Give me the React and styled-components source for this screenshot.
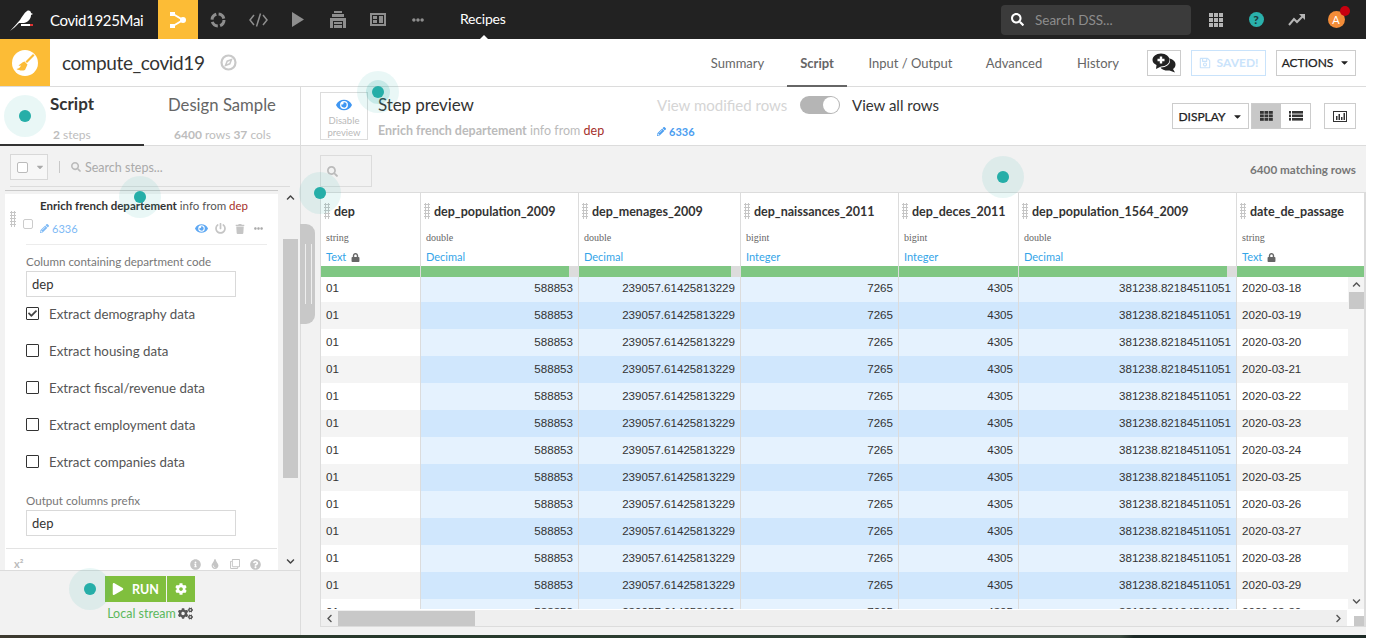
import React from 'react';
import styled, { createGlobalStyle } from 'styled-components';
import {
  FaEye, FaPowerOff, FaTrash, FaEllipsisH, FaPencilAlt, FaLock, FaPlay, FaCog, FaCogs,
  FaInfoCircle, FaTint, FaRegClone, FaQuestionCircle, FaSearch, FaRegSave, FaCaretDown,
  FaChevronUp, FaChevronDown, FaChevronLeft, FaChevronRight, FaCheck,
} from 'react-icons/fa';

const SANS = '"Lato", "Noto Sans", sans-serif';

const Global = createGlobalStyle`
  html, body { margin: 0; padding: 0; background: #fff; overflow: hidden; }
  body { font-family: ${SANS}; color: #333; width: 1378px; height: 638px; }
  * { box-sizing: border-box; }
`;

const Page = styled.div`
  position: relative;
  width: 1366px;
  height: 638px;
  display: flex;
  flex-direction: column;
  background: linear-gradient(90deg, #3d3a30 0%, #24382a 30%, #3c4a40 82%, #1d2a26 83%);
  overflow: hidden;
`;

/* ---------- top bar ---------- */
const TopBar = styled.header`
  height: 39px;
  flex: none;
  display: flex;
  align-items: center;
  background: #222;
  color: #fff;
`;
const Logo = styled.div`
  width: 50px;
  display: flex;
  justify-content: flex-start;
  padding-left: 9px;
`;
const ProjectName = styled.div`
  width: 108px;
  font-size: 15px;
  letter-spacing: -0.35px;
  white-space: nowrap;
`;
const NavCell = styled.div`
  width: 40px;
  height: 39px;
  display: flex;
  align-items: center;
  justify-content: center;
  color: #8e8e8e;
  background: ${p => (p.$active ? '#fcbc36' : 'transparent')};
`;
const NavLabel = styled.div`
  position: relative;
  margin-left: 22px;
  width: 45px;
  height: 39px;
  line-height: 38px;
  font-size: 14px;
  letter-spacing: -0.2px;
  white-space: nowrap;
  &::after {
    content: '';
    position: absolute;
    left: 20px;
    bottom: 0;
    border: 4px solid transparent;
    border-top: 0;
    border-bottom-color: #fff;
  }
`;
const SearchBox = styled.div`
  margin-left: auto;
  width: 190px;
  height: 30px;
  display: flex;
  align-items: center;
  gap: 11px;
  padding-left: 10px;
  border-radius: 4px;
  background: #3b3b3b;
  color: #fff;
  font-size: 13.5px;
  span { color: #8d8d8d; }
`;
const TopIcons = styled.div`
  width: 175px;
  display: flex;
  align-items: center;
  padding-left: 5px;
`;
const TopIcon = styled.div`
  position: relative;
  width: 40px;
  display: flex;
  justify-content: center;
  color: #b5b5b5;
`;
const HelpDot = styled.div`
  width: 15px;
  height: 15px;
  border-radius: 50%;
  background: #2ab1ac;
  color: #1d3a3a;
  font-size: 12px;
  font-weight: 900;
  line-height: 15px;
  text-align: center;
`;
const Avatar = styled.div`
  position: relative;
  width: 17px;
  height: 17px;
  border-radius: 50%;
  background: #f28c38;
  color: #fff;
  font-size: 11px;
  line-height: 17px;
  text-align: center;
`;
const AvatarBadge = styled.i`
  position: absolute;
  top: -5px;
  right: -5px;
  width: 10px;
  height: 10px;
  border-radius: 50%;
  background: #c8000f;
`;

/* ---------- recipe header ---------- */
const SubHeader = styled.div`
  height: 48px;
  flex: none;
  display: flex;
  align-items: stretch;
  background: #fff;
  border-bottom: 1px solid #dcdcdc;
`;
const RecipeIcon = styled.div`
  width: 50px;
  display: flex;
  align-items: center;
  justify-content: center;
  background: #fcbc36;
`;
const RecipeTitle = styled.div`
  display: flex;
  align-items: center;
  gap: 15px;
  padding-left: 12px;
  font-size: 19px;
  letter-spacing: -0.4px;
  color: #333;
`;
const Tabs = styled.nav`
  margin-left: auto;
  display: flex;
  align-items: stretch;
`;
const Tab = styled.div`
  width: ${p => p.$w}px;
  display: flex;
  align-items: center;
  justify-content: center;
  padding-top: 2px;
  font-size: 13px;
  white-space: nowrap;
  color: #666;
  font-weight: ${p => (p.$active ? 700 : 400)};
  border-bottom: 2px solid ${p => (p.$active ? '#666' : 'transparent')};
  margin-bottom: -1px;
`;
const HeadActions = styled.div`
  display: flex;
  align-items: center;
  gap: 10px;
  padding: 0 10px 0 5px;
`;
const Btn = styled.button`
  height: 26px;
  width: ${p => p.$w}px;
  padding: 0;
  display: inline-flex;
  align-items: center;
  justify-content: center;
  gap: 6px;
  font-family: ${SANS};
  font-size: 12px;
  font-weight: ${p => (p.$faded ? 700 : 400)};
  -webkit-text-stroke: ${p => (p.$faded ? 0 : 0.25)}px;
  color: ${p => (p.$faded ? '#c9e3fb' : '#222')};
  background: #fff;
  border: 1px solid ${p => (p.$faded ? '#c9e3fb' : '#ccc')};
  white-space: nowrap;
`;

/* ---------- main ---------- */
const Main = styled.main`
  height: 548px;
  flex: none;
  display: flex;
  background: #f2f2f2;
`;
const Left = styled.aside`
  width: 301px;
  flex: none;
  display: flex;
  flex-direction: column;
  border-right: 1px solid #dcdcdc;
`;
const LeftTabs = styled.div`
  height: 59px;
  flex: none;
  display: flex;
  background: #fff;
  border-bottom: 1px solid #dcdcdc;
`;
const LeftTab = styled.div`
  width: ${p => p.$w}px;
  padding-top: ${p => p.$pt}px;
  padding-left: ${p => p.$pl}px;
  border-bottom: ${p => (p.$active ? '2px solid #333' : 'none')};
  height: ${p => (p.$active ? '59px' : '58px')};
`;
const LeftTabTitle = styled.div`
  font-size: ${p => (p.$active ? 17 : 16.7)}px;
  font-weight: ${p => (p.$active ? 700 : 400)};
  color: ${p => (p.$active ? '#333' : '#666')};
  line-height: 20px;
  white-space: nowrap;
`;
const LeftTabSub = styled.div`
  margin-top: ${p => p.$mt}px;
  margin-left: ${p => p.$ml}px;
  font-size: 12px;
  color: #bdbdbd;
  line-height: 14px;
  white-space: nowrap;
  b { font-weight: 700; }
`;
const StepToolbar = styled.div`
  height: 41px;
  flex: none;
  margin: 0 10px;
  display: flex;
  align-items: center;
  border-bottom: 1px solid #dcdcdc;
  padding-top: 2px;
`;
const SelectAll = styled.div`
  width: 38px;
  height: 26px;
  display: flex;
  align-items: center;
  gap: 7px;
  padding-left: 6px;
  border: 1px solid #d8d8d8;
  background: #f7f7f7;
  color: #aaa;
`;
const Box = styled.span`
  width: ${p => p.$s || 11}px;
  height: ${p => p.$s || 11}px;
  flex: none;
  display: inline-flex;
  align-items: center;
  justify-content: center;
  background: #fff;
  border: 1px solid ${p => p.$c || '#bbb'};
  border-radius: ${p => p.$r || 2}px;
  color: #333;
`;
const Sep = styled.div`
  width: 1px;
  height: 12px;
  background: #c8c8c8;
  margin: 0 11px;
`;
const StepSearch = styled.div`
  display: flex;
  align-items: center;
  gap: 4px;
  font-size: 12.5px;
  color: #aaa;
  white-space: nowrap;
`;
const StepsArea = styled.div`
  flex: 1;
  min-height: 0;
  display: flex;
  padding: 3px 0 0 5px;
  overflow: hidden;
`;
const Card = styled.section`
  position: relative;
  width: 273px;
  height: 380px;
  flex: none;
  border-top: 1px solid #c9c9c9;
  padding-top: 3px;
  background: linear-gradient(#f2f2f2 3px, #fff 3px);
  overflow: hidden;
`;
const CardHead = styled.div`
  display: grid;
  grid-template-columns: 13px 17px 1fr;
  padding: 4px 0 0 5px;
  height: 50px;
`;
const Grip = styled.span`
  display: block;
  flex: none;
  width: 6px;
  height: 16px;
  background-image: radial-gradient(#c6c6c6 1px, transparent 1.1px);
  background-size: 3px 3px;
`;
const GripCell = styled.div`
  padding-top: 13px;
`;
const BoxCell = styled.div`
  padding-top: 15px;
`;
const StepTitle = styled.div`
  font-size: 11.5px;
  line-height: 16px;
  color: #555;
  white-space: nowrap;
  b { color: #333; font-weight: 700; }
  em { font-style: normal; color: #a5302c; }
`;
const StepMeta = styled.div`
  display: flex;
  align-items: center;
  margin-top: 8px;
  width: 228px;
  color: #c5c5c5;
`;
const Pencil = styled.span`
  display: inline-flex;
  align-items: center;
  gap: 3px;
  font-size: 11px;
  font-weight: ${p => (p.$bold ? 700 : 400)};
  color: ${p => (p.$bold ? '#4a9df0' : '#7db9f5')};
`;
const MetaIcons = styled.div`
  margin-left: auto;
  display: grid;
  grid-template-columns: repeat(4, 19px);
  justify-items: center;
  align-items: center;
`;
const StepBody = styled.div`
  margin: 0 11px 0 21px;
  border-top: 1px solid #ececec;
  padding-top: 9px;
`;
const FieldLabel = styled.div`
  font-size: 11.6px;
  line-height: 15px;
  color: #777;
  white-space: nowrap;
`;
const TextInput = styled.div`
  width: 210px;
  height: 26px;
  margin-top: 2px;
  padding-left: 5px;
  border: 1px solid #d9d9d9;
  background: #fff;
  font-size: 13px;
  line-height: 24px;
  color: #333;
`;
const Checks = styled.div`
  margin: -2px 0 13px;
`;
const CheckRow = styled.div`
  height: 37px;
  display: flex;
  align-items: center;
  gap: 10px;
  font-size: 13.3px;
  color: #555;
  white-space: nowrap;
`;
const StepFooter = styled.div`
  margin: 12px 1px 0;
  border-top: 1px solid #e3e3e3;
  padding: 9px 12px 0 8px;
  height: 22px;
  display: flex;
  align-items: center;
  color: #bbb;
  font-size: 11px;
  font-weight: 700;
  line-height: 12px;
`;
const FootIcons = styled.div`
  margin-left: auto;
  display: grid;
  grid-template-columns: repeat(4, 20px);
  justify-items: center;
  color: #c5c5c5;
`;
const ScrollY = styled.div`
  width: 15px;
  flex: none;
  margin: 0 0 0 5px;
  display: flex;
  flex-direction: column;
  align-items: center;
  color: #444;
`;
const ArrowCell = styled.div`
  height: ${p => p.$h}px;
  flex: none;
  display: flex;
  align-items: center;
  justify-content: center;
`;
const ThumbY = styled.div`
  width: 100%;
  height: ${p => p.$h}px;
  flex: none;
  background: #c8c8c8;
`;
const RunBar = styled.div`
  height: 65px;
  flex: none;
  display: flex;
  flex-direction: column;
  align-items: center;
  padding-top: 5px;
  border-top: 1px solid #dcdcdc;
`;
const RunRow = styled.div`
  display: flex;
  gap: 1px;
`;
const RunBtn = styled.button`
  width: ${p => p.$w}px;
  height: 26px;
  padding: 0;
  border: 0;
  background: #80bf3e;
  color: #fff;
  font-family: ${SANS};
  font-size: 12.5px;
  font-weight: 700;
  display: flex;
  align-items: center;
  justify-content: center;
  gap: 8px;
`;
const Engine = styled.div`
  margin-top: 4px;
  display: flex;
  align-items: center;
  gap: 2px;
  font-size: 12.5px;
  color: #5cb85c;
  svg { color: #555; }
`;

/* ---------- right ---------- */
const Right = styled.div`
  flex: 1;
  min-width: 0;
  display: flex;
  flex-direction: column;
`;
const PreviewBar = styled.div`
  height: 59px;
  flex: none;
  display: flex;
  align-items: flex-start;
  background: #fff;
  border-bottom: 1px solid #dcdcdc;
  padding: 5px 10px 0 19px;
`;
const DisableBox = styled.div`
  width: 48px;
  height: 48px;
  flex: none;
  border: 1px solid #dcdcdc;
  display: flex;
  flex-direction: column;
  align-items: center;
  padding-top: 5px;
  font-size: 9.5px;
  line-height: 12px;
  color: #b9b9b9;
  text-align: center;
  svg { color: #3f96f2; margin-bottom: 3px; }
`;
const PreviewText = styled.div`
  width: 289px;
  padding: 2px 0 0 10px;
  flex: none;
`;
const PreviewTitle = styled.div`
  font-size: 17px;
  letter-spacing: -0.1px;
  line-height: 22px;
  color: #333;
  white-space: nowrap;
`;
const PreviewSub = styled.div`
  margin-top: 8px;
  font-size: 12.5px;
  line-height: 14px;
  color: #bbb;
  white-space: nowrap;
  b { font-weight: 700; }
  em { font-style: normal; color: #a5302c; }
`;
const ModeCol = styled.div`
  flex: none;
  padding-top: 4px;
`;
const ModeRow = styled.div`
  display: flex;
  align-items: center;
  height: 18px;
  font-size: 15px;
  white-space: nowrap;
  color: #333;
`;
const ModeOff = styled.span`
  width: 143px;
  color: #d5d5d5;
`;
const Toggle = styled.span`
  position: relative;
  width: 40px;
  height: 18px;
  margin-right: 12px;
  flex: none;
  border-radius: 9px;
  background: #b5b5b5;
  &::after {
    content: '';
    position: absolute;
    right: 1px;
    top: 1px;
    width: 16px;
    height: 16px;
    border-radius: 50%;
    background: #fff;
  }
`;
const ModeCount = styled.div`
  margin-top: 6px;
`;
const DisplayTools = styled.div`
  margin-left: auto;
  margin-top: 11px;
  display: flex;
  align-items: center;
`;
const ViewGroup = styled.div`
  display: flex;
  width: 60px;
  height: 26px;
  margin: 0 13px 0 2px;
  border: 1px solid #ccc;
  background: #fff;
`;
const ViewCell = styled.div`
  width: 30px;
  display: flex;
  align-items: center;
  justify-content: center;
  background: ${p => (p.$on ? '#c8c8c8' : '#fff')};
`;
const FilterBar = styled.div`
  height: 46px;
  flex: none;
  display: flex;
  align-items: flex-start;
  justify-content: space-between;
  padding: 9px 10px 0 19px;
`;
const FilterBox = styled.div`
  width: 52px;
  height: 32px;
  padding-left: 6px;
  display: flex;
  align-items: center;
  border: 1px solid #dcdcdc;
  color: #bbb;
`;
const MatchCount = styled.div`
  margin-top: 7px;
  font-size: 11.7px;
  line-height: 15px;
  font-weight: 700;
  color: #777;
`;
const Frame = styled.div`
  position: relative;
  width: 1046px;
  height: 435px;
  margin-left: 19px;
  flex: none;
  border: 1px solid #dcdcdc;
  border-right-width: 2px;
  background: #efefef;
`;
const TableClip = styled.div`
  height: 416px;
  overflow: hidden;
  background: #fff;
`;
const GridRow = styled.div`
  display: grid;
  grid-template-columns: 100px 158px 162px 158px 120px 218px 127px;
`;
const HeadCell = styled.div`
  position: relative;
  height: 73px;
  padding: 8px 0 0 5px;
  border-right: 1px solid #dcdcdc;
  background: #fff;
  &:last-child { border-right: 0; }
`;
const HeadName = styled.div`
  display: flex;
  align-items: center;
  gap: 4px;
  height: 20px;
  margin-left: -2px;
  font-size: 12.5px;
  font-weight: 700;
  color: #333;
  white-space: nowrap;
`;
const HeadType = styled.div`
  margin-top: 10px;
  font-family: "Liberation Serif", serif;
  font-size: 10px;
  line-height: 14px;
  color: #666;
`;
const HeadMeaning = styled.div`
  margin-top: 5px;
  display: flex;
  align-items: center;
  gap: 5px;
  font-size: 11px;
  line-height: 14px;
  color: #34a5e8;
  svg { color: #666; }
`;
const QualityCell = styled.div`
  height: 11px;
  border-right: 1px solid #dcdcdc;
  background: ${p => (p.$rest
    ? 'linear-gradient(90deg, #7fc783 calc(100% - 9px), #dcdcdc calc(100% - 9px))'
    : '#7fc783')};
  &:last-child { border-right: 0; }
`;
const Cell = styled.div`
  height: ${p => (p.$first ? 25 : 27)}px;
  line-height: ${p => (p.$first ? 21 : 25)}px;
  padding: 0 5px;
  font-family: "Liberation Sans", Arial, sans-serif;
  font-size: 11.6px;
  color: #333;
  white-space: nowrap;
  text-align: ${p => (p.$num ? 'right' : 'left')};
  border-right: 1px solid #dcdcdc;
  background: ${p =>
    p.$num ? (p.$odd ? '#d0e7fd' : '#e5f2fe') : p.$odd ? '#f4f4f4' : '#fff'};
  &:last-child { border-right: 0; }
`;
const VBar = styled.div`
  position: absolute;
  top: 84px;
  right: 0;
  width: 16px;
  height: 332px;
  display: flex;
  flex-direction: column;
  align-items: center;
  color: #555;
  background: #f4f4f4;
`;
const VThumb = styled.div`
  width: 15px;
  height: 17px;
  background: #c8c8c8;
`;
const VSpacer = styled.div`
  flex: 1;
`;
const HBar = styled.div`
  height: 17px;
  display: flex;
  align-items: center;
  color: #555;
  background: #efefef;
  border-top: 1px solid #fff;
`;
const HThumb = styled.div`
  width: 137px;
  height: 15px;
  background: #c8c8c8;
`;
const HFill = styled.div`
  flex: 1;
`;
const HArrow = styled.div`
  width: 17px;
  flex: none;
  display: flex;
  justify-content: center;
`;
const Corner = styled.div`
  width: 17px;
  height: 100%;
  flex: none;
  display: flex;
  align-items: flex-end;
  justify-content: flex-end;
  background: #fff;
  &::after {
    content: '';
    width: 10px;
    height: 10px;
    background: #c8c8c8;
  }
`;
const Splitter = styled.div`
  position: absolute;
  left: 300px;
  top: 224px;
  width: 15px;
  height: 100px;
  border-radius: 0 9px 9px 0;
  background: #c8c8c8;
  &::after {
    content: '';
    position: absolute;
    left: 5px;
    top: 20px;
    width: 5px;
    height: 60px;
    border-left: 1px solid #eee;
    border-right: 1px solid #eee;
  }
`;

/* ---------- tutorial hotspots ---------- */
const Hotspot = styled.span`
  position: absolute;
  left: ${p => p.$x - 21}px;
  top: ${p => p.$y - 21}px;
  width: 42px;
  height: 42px;
  border-radius: 50%;
  background: rgba(38, 174, 168, 0.1);
  pointer-events: none;
  &::before {
    content: '';
    position: absolute;
    inset: ${p => (p.$ring ? 9 : 15)}px;
    border-radius: 50%;
    background: rgba(38, 174, 168, 0.18);
  }
  &::after {
    content: '';
    position: absolute;
    left: 15px;
    top: 15px;
    width: 12px;
    height: 12px;
    border-radius: 50%;
    background: #26aea8;
  }
`;

/* ---------- drawings ---------- */
const Bird = () => (
  <svg width="24" height="24" viewBox="0 0 24 24">
    <path fill="#fff" d="M1 23 C5 19 8 15 11 12 C13 9 15 5 18 3 C20 2 22 3 22 5 L24 6 L22 7 C22 10 20 14 15 15 L10 15 C7 18 4 21 1 23Z" />
    <rect x="12" y="16" width="9" height="2" fill="#fff" />
    <rect x="21" y="16" width="3" height="2" fill="#d33" />
  </svg>
);
const FlowIcon = () => (
  <svg width="18" height="18" viewBox="0 0 18 18">
    <path fill="none" stroke="#fff" strokeWidth="2" d="M4 3 L14 9 L4 15" />
    <rect x="1" y="1" width="5" height="4" fill="#fff" />
    <rect x="1" y="13" width="5" height="4" fill="#fff" />
    <circle cx="14" cy="9" r="3" fill="#fff" />
  </svg>
);
const RingIcon = () => (
  <svg width="16" height="16" viewBox="0 0 16 16">
    <circle cx="8" cy="8" r="6" fill="none" stroke="#8e8e8e" strokeWidth="3" strokeDasharray="7 2.4" />
  </svg>
);
const CodeIcon = () => (
  <svg width="19" height="14" viewBox="0 0 19 14" fill="none" stroke="#8e8e8e" strokeWidth="1.5">
    <path d="M5 2 L1 7 L5 12" />
    <path d="M14 2 L18 7 L14 12" />
    <path d="M11.5 0.5 L7.5 13.5" />
  </svg>
);
const PlayIcon = () => (
  <svg width="12" height="15" viewBox="0 0 12 15"><path fill="#8e8e8e" d="M0 0 L12 7.5 L0 15Z" /></svg>
);
const StackIcon = () => (
  <svg width="16" height="17" viewBox="0 0 16 17" fill="#8e8e8e">
    <rect x="4" y="0" width="8" height="2" />
    <rect x="2" y="3" width="12" height="3" />
    <path d="M0 7 H16 V17 H13 V10 H3 V17 H0Z" />
    <rect x="4" y="11" width="8" height="2" />
    <rect x="4" y="14" width="8" height="3" />
  </svg>
);
const BoardIcon = () => (
  <svg width="16" height="13" viewBox="0 0 16 13">
    <rect x="1" y="1" width="14" height="11" fill="none" stroke="#8e8e8e" strokeWidth="2" />
    <rect x="3" y="3" width="4" height="3" fill="#8e8e8e" />
    <rect x="3" y="7" width="4" height="3" fill="#8e8e8e" />
    <rect x="9" y="3" width="4" height="7" fill="#8e8e8e" />
  </svg>
);
const AppsIcon = () => (
  <svg width="14" height="14" viewBox="0 0 14 14" fill="#b5b5b5">
    {[0, 5, 10].flatMap(x => [0, 5, 10].map(y => <rect key={`${x}-${y}`} x={x} y={y} width="4" height="4" />))}
  </svg>
);
const TrendIcon = () => (
  <svg width="17" height="12" viewBox="0 0 17 12" fill="none" stroke="#b5b5b5" strokeWidth="2">
    <path d="M1 11 L6 5 L9 8 L15 2" />
    <path fill="#b5b5b5" stroke="none" d="M11 0 H17 V6Z" />
  </svg>
);
const Broom = () => (
  <svg width="26" height="26" viewBox="0 0 26 26">
    <circle cx="13" cy="13" r="13" fill="#fff" />
    <path fill="#fcbc36" d="M21 4 L22.5 5.5 L15 13 L13.5 11.5Z" />
    <path fill="#fcbc36" d="M12.5 11.5 L15.5 14.5 L13 20 C10 21 7 20.5 4.5 19 C7 18.5 8.5 17 9 15.5 L6.5 16 C8 14 10 12.5 12.5 11.5Z" />
  </svg>
);
const Compass = () => (
  <svg width="17" height="17" viewBox="0 0 17 17">
    <circle cx="8.5" cy="8.5" r="7" fill="none" stroke="#c9c9c9" strokeWidth="2.2" />
    <path fill="none" stroke="#c9c9c9" strokeWidth="1.5" d="M11.5 5.5 L9.8 9.8 L5.5 11.5 L7.2 7.2Z" />
  </svg>
);
const DiscussIcon = () => (
  <svg width="24" height="20" viewBox="0 0 24 20">
    <path fill="#222" d="M14 5 C19 5 23.5 7.5 23.5 11.5 C23.5 13.5 22.5 15 21 16 L23 19.5 L17.5 17.5 C14 18 10 17 8 14Z" />
    <path fill="#fff" d="M9 2 C14 2 18 4.5 18 8 C18 11.5 14 14.5 9 14.5 L3.5 17 L4 13 C2 11.8 0.5 10 0.5 8 C0.5 4.5 4 2 9 2Z" />
    <path fill="#222" d="M9 0.5 C14 0.5 17.5 3.5 17.5 7 C17.5 10.5 14 13.5 9 13.5 L4 16 L4.5 12 C2 11 0.5 9 0.5 7 C0.5 3.5 4 0.5 9 0.5Z" />
    <path fill="#fff" d="M7.8 3.5 H10.2 V5.8 H12.5 V8.2 H10.2 V10.5 H7.8 V8.2 H5.5 V5.8 H7.8Z" />
  </svg>
);
const TableIcon = () => (
  <svg width="13" height="10" viewBox="0 0 13 10" fill="#333">
    {[0, 3.5, 7].flatMap(y => [0, 4.5, 9].map(x => <rect key={`${x}-${y}`} x={x} y={y} width="3.8" height="2.8" />))}
  </svg>
);
const ListIcon = () => (
  <svg width="14" height="10" viewBox="0 0 14 10" fill="#333">
    {[0, 3.5, 7].map(y => <g key={y}><rect x="0" y={y} width="2" height="2.6" /><rect x="3" y={y} width="11" height="2.6" /></g>)}
  </svg>
);
const ChartIcon = () => (
  <svg width="14" height="11" viewBox="0 0 14 11">
    <rect x="0.5" y="0.5" width="13" height="10" fill="none" stroke="#333" />
    <path fill="#333" d="M3 5 h1.5 v4 H3Z M5.5 3 h1.5 v6 H5.5Z M8 6 h1.5 v3 H8Z M10.5 2 h1.5 v7 h-1.5Z" />
  </svg>
);

/* ---------- data ---------- */
const COLUMNS = [
  { name: 'dep', type: 'string', meaning: 'Text', lock: true },
  { name: 'dep_population_2009', type: 'double', meaning: 'Decimal', value: '588853' },
  { name: 'dep_menages_2009', type: 'double', meaning: 'Decimal', value: '239057.61425813229' },
  { name: 'dep_naissances_2011', type: 'bigint', meaning: 'Integer', value: '7265' },
  { name: 'dep_deces_2011', type: 'bigint', meaning: 'Integer', value: '4305' },
  { name: 'dep_population_1564_2009', type: 'double', meaning: 'Decimal', value: '381238.82184511051' },
  { name: 'date_de_passage', type: 'string', meaning: 'Text', lock: true },
];
const DAYS = Array.from({ length: 13 }, (_, i) => `2020-03-${18 + i}`);
const CHECKS = [
  ['Extract demography data', true],
  ['Extract housing data', false],
  ['Extract fiscal/revenue data', false],
  ['Extract employment data', false],
  ['Extract companies data', false],
];
const HOTSPOTS = [
  { x: 25, y: 116 },
  { x: 378, y: 92, ring: true },
  { x: 140, y: 197 },
  { x: 320, y: 193 },
  { x: 1003, y: 177 },
  { x: 90, y: 589 },
];

const cellText = (col, day) => {
  if (col.name === 'dep') return '01';
  if (col.name === 'date_de_passage') return day;
  return col.value;
};

export default function App() {
  return (
    <Page>
      <Global />
      <TopBar>
        <Logo><Bird /></Logo>
        <ProjectName>Covid1925Mai</ProjectName>
        <NavCell $active><FlowIcon /></NavCell>
        <NavCell><RingIcon /></NavCell>
        <NavCell><CodeIcon /></NavCell>
        <NavCell><PlayIcon /></NavCell>
        <NavCell><StackIcon /></NavCell>
        <NavCell><BoardIcon /></NavCell>
        <NavCell><FaEllipsisH size={12} /></NavCell>
        <NavLabel>Recipes</NavLabel>
        <SearchBox><FaSearch size={13} /><span>Search DSS...</span></SearchBox>
        <TopIcons>
          <TopIcon><AppsIcon /></TopIcon>
          <TopIcon><HelpDot>?</HelpDot></TopIcon>
          <TopIcon><TrendIcon /></TopIcon>
          <TopIcon><Avatar>A<AvatarBadge /></Avatar></TopIcon>
        </TopIcons>
      </TopBar>

      <SubHeader>
        <RecipeIcon><Broom /></RecipeIcon>
        <RecipeTitle>compute_covid19 <Compass /></RecipeTitle>
        <Tabs>
          <Tab $w={99}>Summary</Tab>
          <Tab $w={60} $active>Script</Tab>
          <Tab $w={127}>Input / Output</Tab>
          <Tab $w={80}>Advanced</Tab>
          <Tab $w={88}>History</Tab>
        </Tabs>
        <HeadActions>
          <Btn $w={34}><DiscussIcon /></Btn>
          <Btn $w={75} $faded><FaRegSave size={12} /> SAVED!</Btn>
          <Btn $w={80}>ACTIONS <FaCaretDown size={11} /></Btn>
        </HeadActions>
      </SubHeader>

      <Main>
        <Left>
          <LeftTabs>
            <LeftTab $active $w={144} $pt={7} $pl={50}>
              <LeftTabTitle $active>Script</LeftTabTitle>
              <LeftTabSub $mt={14} $ml={3}><b>2</b> steps</LeftTabSub>
            </LeftTab>
            <LeftTab $w={156} $pt={8} $pl={24}>
              <LeftTabTitle>Design Sample</LeftTabTitle>
              <LeftTabSub $mt={13} $ml={6}><b>6400</b> rows <b>37</b> cols</LeftTabSub>
            </LeftTab>
          </LeftTabs>
          <StepToolbar>
            <SelectAll><Box /><FaCaretDown size={10} /></SelectAll>
            <Sep />
            <StepSearch><FaSearch size={10} color="#bbb" /> Search steps...</StepSearch>
          </StepToolbar>
          <StepsArea>
            <Card>
              <CardHead>
                <GripCell><Grip /></GripCell>
                <BoxCell><Box $s={10} $c="#ccc" /></BoxCell>
                <div>
                  <StepTitle><b>Enrich french departement</b> info from <em>dep</em></StepTitle>
                  <StepMeta>
                    <Pencil><FaPencilAlt size={9} /> 6336</Pencil>
                    <MetaIcons>
                      <FaEye size={13} color="#5ea8f3" />
                      <FaPowerOff size={11} />
                      <FaTrash size={10} />
                      <FaEllipsisH size={9} color="#aaa" />
                    </MetaIcons>
                  </StepMeta>
                </div>
              </CardHead>
              <StepBody>
                <FieldLabel>Column containing department code</FieldLabel>
                <TextInput>dep</TextInput>
                <Checks>
                  {CHECKS.map(([label, on]) => (
                    <CheckRow key={label}>
                      <Box $s={13} $c="#333" $r={1}>{on && <FaCheck size={9} color="#444" />}</Box>
                      {label}
                    </CheckRow>
                  ))}
                </Checks>
                <FieldLabel>Output columns prefix</FieldLabel>
                <TextInput>dep</TextInput>
              </StepBody>
              <StepFooter>
                <span>x²</span>
                <FootIcons>
                  <FaInfoCircle size={11} />
                  <FaTint size={10} />
                  <FaRegClone size={10} />
                  <FaQuestionCircle size={11} />
                </FootIcons>
              </StepFooter>
            </Card>
            <ScrollY>
              <ArrowCell $h={14}><FaChevronUp size={9} /></ArrowCell>
              <ArrowCell $h={35} />
              <ThumbY $h={239} />
              <ArrowCell $h={76} />
              <ArrowCell $h={14}><FaChevronDown size={9} /></ArrowCell>
            </ScrollY>
          </StepsArea>
          <RunBar>
            <RunRow>
              <RunBtn $w={61}><FaPlay size={12} /> RUN</RunBtn>
              <RunBtn $w={28}><FaCog size={12} /></RunBtn>
            </RunRow>
            <Engine>Local stream <FaCogs size={15} /></Engine>
          </RunBar>
        </Left>

        <Right>
          <PreviewBar>
            <DisableBox><FaEye size={18} /><span>Disable preview</span></DisableBox>
            <PreviewText>
              <PreviewTitle>Step preview</PreviewTitle>
              <PreviewSub><b>Enrich french departement</b> info from <em>dep</em></PreviewSub>
            </PreviewText>
            <ModeCol>
              <ModeRow><ModeOff>View modified rows</ModeOff><Toggle />View all rows</ModeRow>
              <ModeCount><Pencil $bold><FaPencilAlt size={9} /> 6336</Pencil></ModeCount>
            </ModeCol>
            <DisplayTools>
              <Btn $w={77}>DISPLAY <FaCaretDown size={11} /></Btn>
              <ViewGroup>
                <ViewCell $on><TableIcon /></ViewCell>
                <ViewCell><ListIcon /></ViewCell>
              </ViewGroup>
              <Btn $w={32}><ChartIcon /></Btn>
            </DisplayTools>
          </PreviewBar>
          <FilterBar>
            <FilterBox><FaSearch size={11} /></FilterBox>
            <MatchCount>6400 matching rows</MatchCount>
          </FilterBar>
          <Frame>
            <TableClip>
              <GridRow>
                {COLUMNS.map(c => (
                  <HeadCell key={c.name}>
                    <HeadName><Grip />{c.name}</HeadName>
                    <HeadType>{c.type}</HeadType>
                    <HeadMeaning>{c.meaning}{c.lock && <FaLock size={9} />}</HeadMeaning>
                  </HeadCell>
                ))}
              </GridRow>
              <GridRow>
                {COLUMNS.map(c => <QualityCell key={c.name} $rest={c.value && c.type === 'double'} />)}
              </GridRow>
              {DAYS.map((d, i) => (
                <GridRow key={d}>
                  {COLUMNS.map(c => (
                    <Cell key={c.name} $first={i === 0} $odd={i % 2 === 1} $num={Boolean(c.value)}>
                      {cellText(c, d)}
                    </Cell>
                  ))}
                </GridRow>
              ))}
            </TableClip>
            <VBar>
              <ArrowCell $h={15}><FaChevronUp size={9} /></ArrowCell>
              <VThumb />
              <VSpacer />
              <ArrowCell $h={15}><FaChevronDown size={9} /></ArrowCell>
            </VBar>
            <HBar>
              <HArrow><FaChevronLeft size={9} /></HArrow>
              <HThumb />
              <HFill />
              <HArrow><FaChevronRight size={9} /></HArrow>
              <Corner />
            </HBar>
          </Frame>
        </Right>
      </Main>
      <Splitter />
      {HOTSPOTS.map(h => <Hotspot key={`${h.x}-${h.y}`} $x={h.x} $y={h.y} $ring={h.ring} />)}
    </Page>
  );
}
